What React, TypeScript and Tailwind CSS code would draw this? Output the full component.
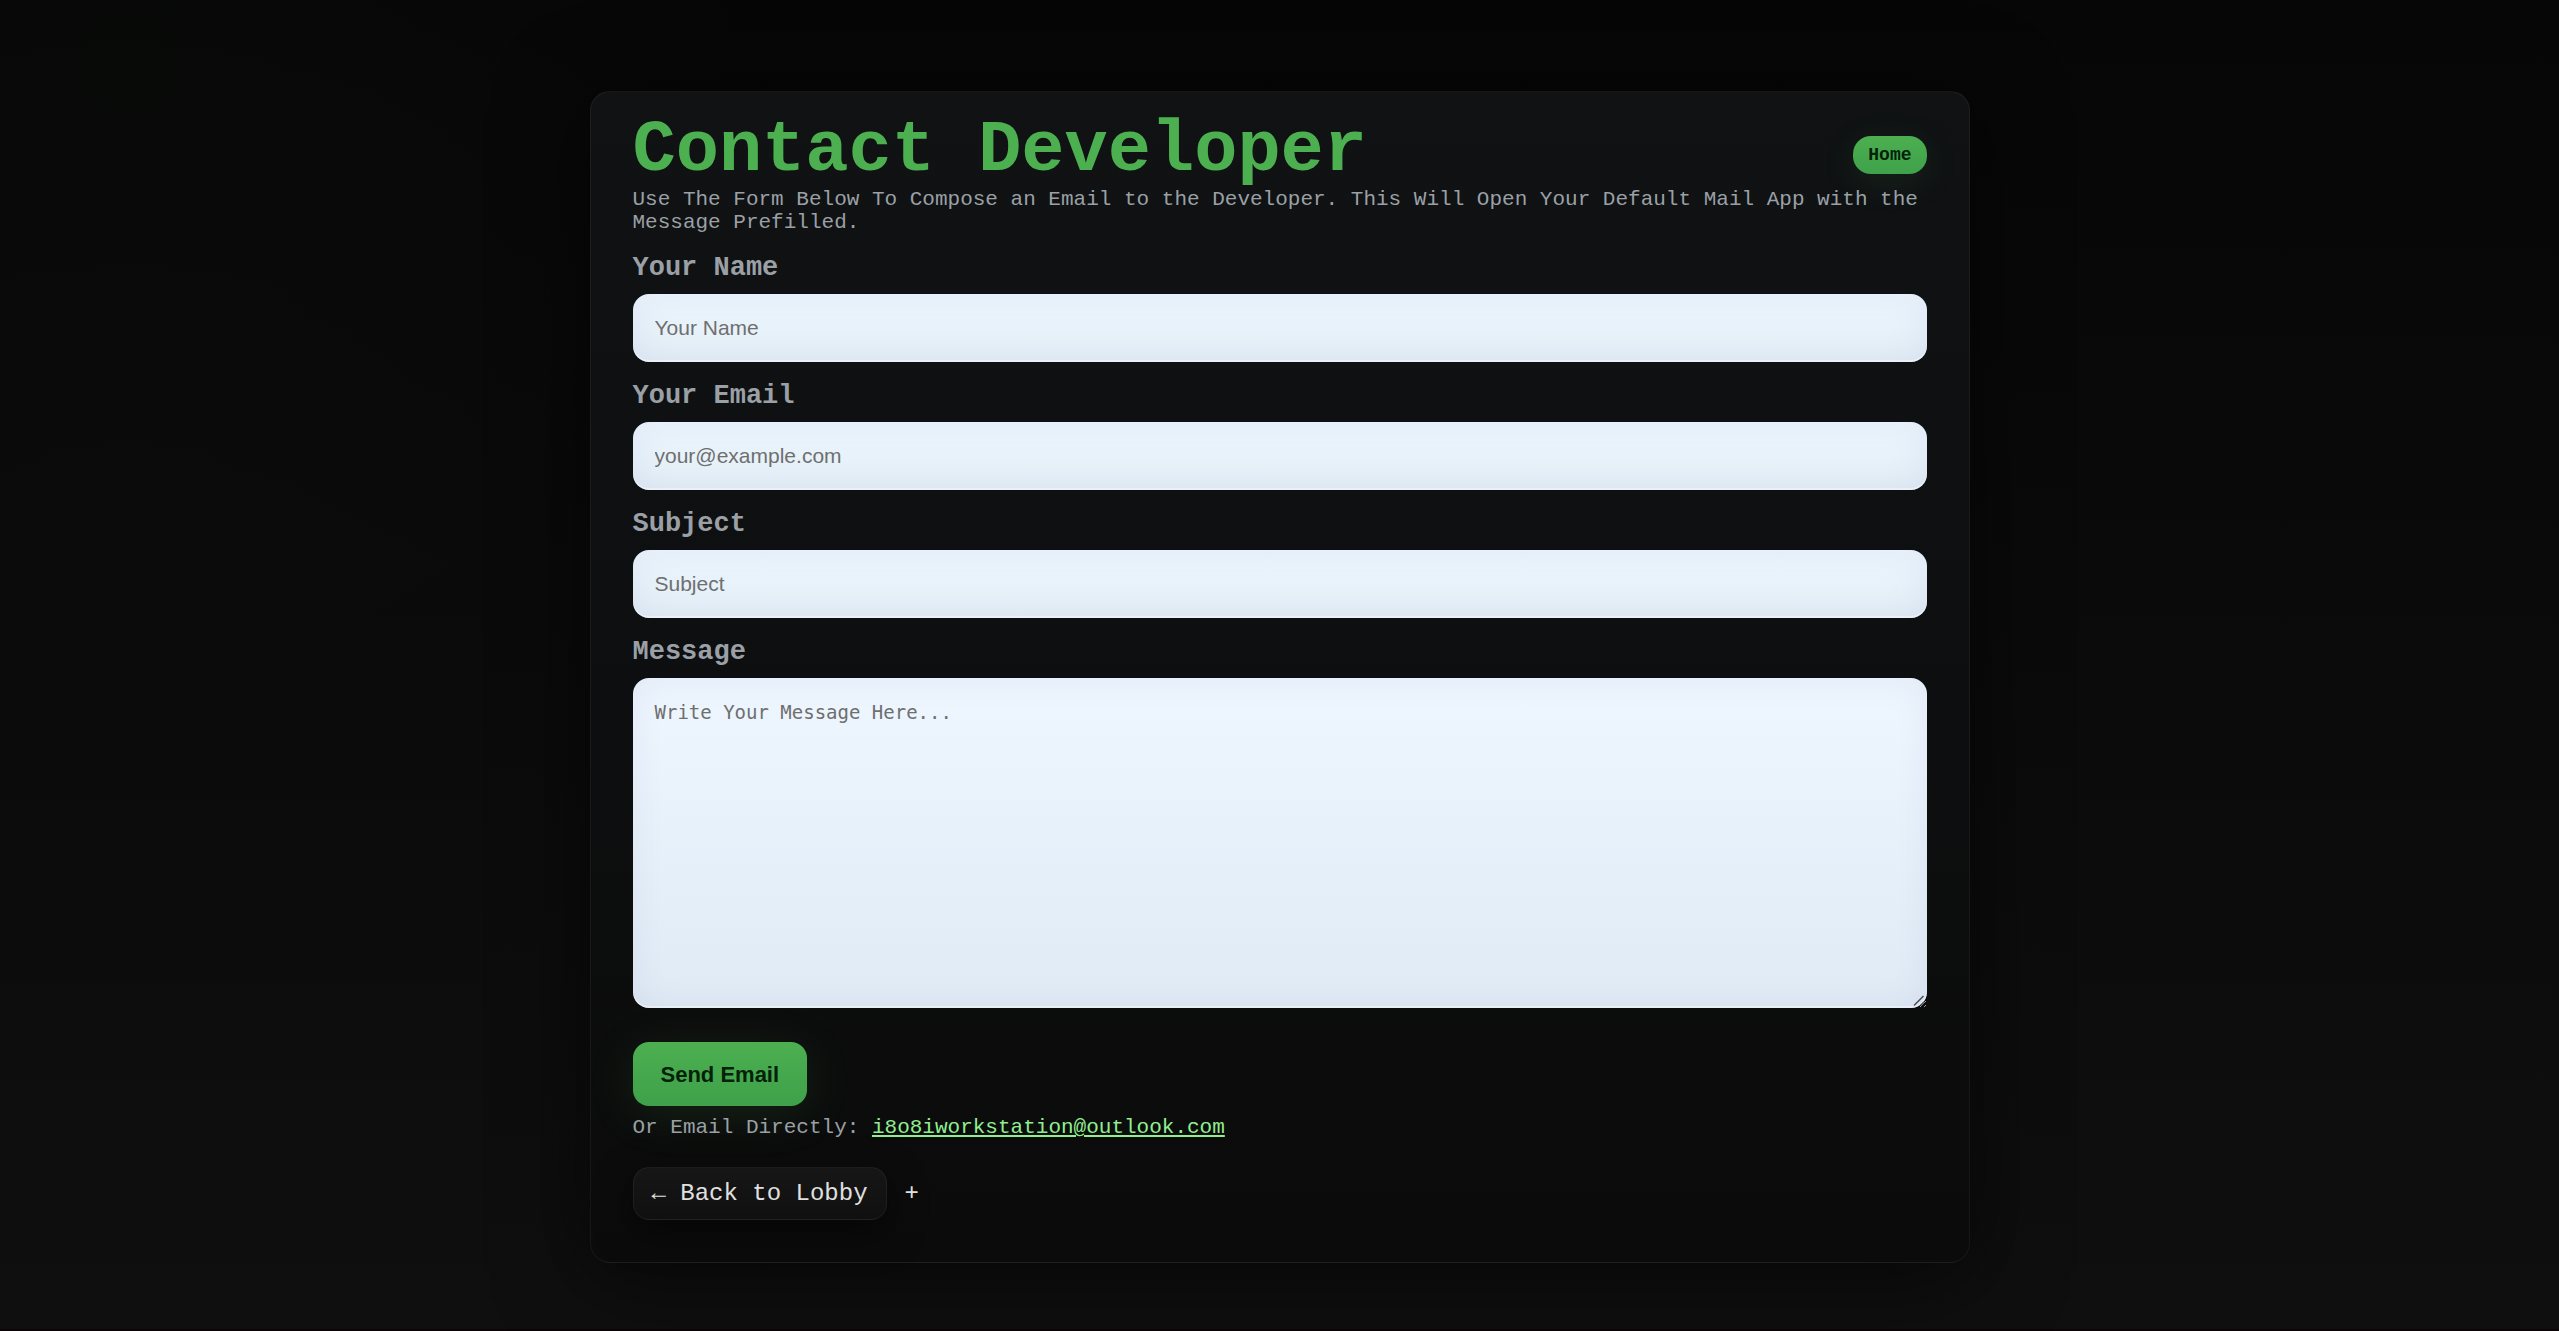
const fieldClass =
  "block w-full rounded-2xl border-0 px-[22px] outline-none text-gray-900 placeholder:text-[#6f6f6f] placeholder:opacity-100 shadow-[inset_0_-2px_0_#ffffff66,inset_0_2px_36px_rgba(40,20,110,0.06)]";
const labelClass = "mb-1 block text-[27px] leading-11 font-bold text-[#9aa0a6]";

function Field({ id, label, type, placeholder }: { id: string; label: string; type: string; placeholder: string }) {
  return (
    <div>
      <label htmlFor={id} className={labelClass}>
        {label}
      </label>
      <input
        id={id}
        type={type}
        placeholder={placeholder}
        className={`${fieldClass} h-[68px] bg-linear-to-b from-[#edf7ff] to-[#e2edf6] font-['Liberation_Sans',Arial,sans-serif] text-[21px]`}
      />
    </div>
  );
}

export default function App() {
  return (
    <main className="min-h-screen border-b-2 border-[#0c0609] bg-[radial-gradient(circle_at_5%_5%,rgba(76,175,80,0.015),transparent_25%),linear-gradient(#060606,#0f0f0f)] px-6 pt-[91px] pb-16 font-['Liberation_Mono','Courier_New',monospace]">
      <section className="mx-auto max-w-[1380px] rounded-[20px] border border-white/5 bg-linear-to-b from-[#101214] to-[#0b0b0b] px-[42px] pt-9 pb-[42px] shadow-[0_12px_90px_rgba(0,0,0,0.6)]">
        <header className="flex items-end justify-between">
          <h1 className="text-[72px] leading-[46px] font-bold text-[#4caf50]">Contact Developer</h1>
          <a
            href="#home"
            className="rounded-[18px] bg-linear-to-b from-[#4caf50] to-[#3fa14a] px-[15px] py-2 text-lg leading-[22px] font-bold text-[#04210a] shadow-[0_8px_36px_rgba(76,175,80,0.12)]"
          >
            Home
          </a>
        </header>
        <p className="mt-[14px] text-[21px] leading-[23px] text-[#9aa0a6]">
          Use The Form Below To Compose an Email to the Developer. This Will Open Your Default Mail App with the
          Message Prefilled.
        </p>
        <form className="mt-3" onSubmit={(e) => e.preventDefault()}>
          <div className="flex flex-col gap-3">
            <Field id="name" label="Your Name" type="text" placeholder="Your Name" />
            <Field id="email" label="Your Email" type="email" placeholder="your@example.com" />
            <Field id="subject" label="Subject" type="text" placeholder="Subject" />
            <div className="relative">
              <label htmlFor="message" className={labelClass}>
                Message
              </label>
              <textarea
                id="message"
                placeholder="Write Your Message Here..."
                className={`${fieldClass} h-[330px] resize-y bg-linear-to-b from-[#eef7ff] to-[#e0eaf5] py-5 font-['DejaVu_Sans_Mono',Consolas,monospace] text-[19px]`}
              />
              <svg
                aria-hidden="true"
                viewBox="0 0 16 16"
                className="pointer-events-none absolute right-0 bottom-0 size-4"
                stroke="#4a4f54"
                strokeWidth="1.5"
              >
                <path d="M3 13.5 12.5 4M9.5 13.5 13 10" />
              </svg>
            </div>
          </div>
          <button
            type="submit"
            className="mt-[34px] h-16 rounded-2xl bg-linear-to-b from-[#4caf50] to-[#3fa14a] px-7 font-['Liberation_Sans',Arial,sans-serif] text-[22px] font-black text-[#04210a] shadow-[0_8px_48px_rgba(76,175,80,0.14)]"
          >
            Send Email
          </button>
        </form>
        <p className="mt-[10px] text-[21px] leading-6 text-[#9aa0a6]">
          Or Email Directly:{" "}
          <a href="mailto:i8o8iworkstation@outlook.com" className="text-[#90ee90] underline decoration-2 underline-offset-2">
            i8o8iworkstation@outlook.com
          </a>
        </p>
        <nav className="mt-[27px] flex items-center gap-[18px] text-2xl text-[#e0e0e0]">
          <a
            href="#lobby"
            className="rounded-2xl border border-white/5 bg-linear-to-b from-[#161616] to-[#101010] px-[18px] py-[10px] leading-[31px] shadow-[0_12px_36px_rgba(0,0,0,0.5)]"
          >
            ← Back to Lobby
          </a>
          <span>+</span>
        </nav>
      </section>
    </main>
  );
}
